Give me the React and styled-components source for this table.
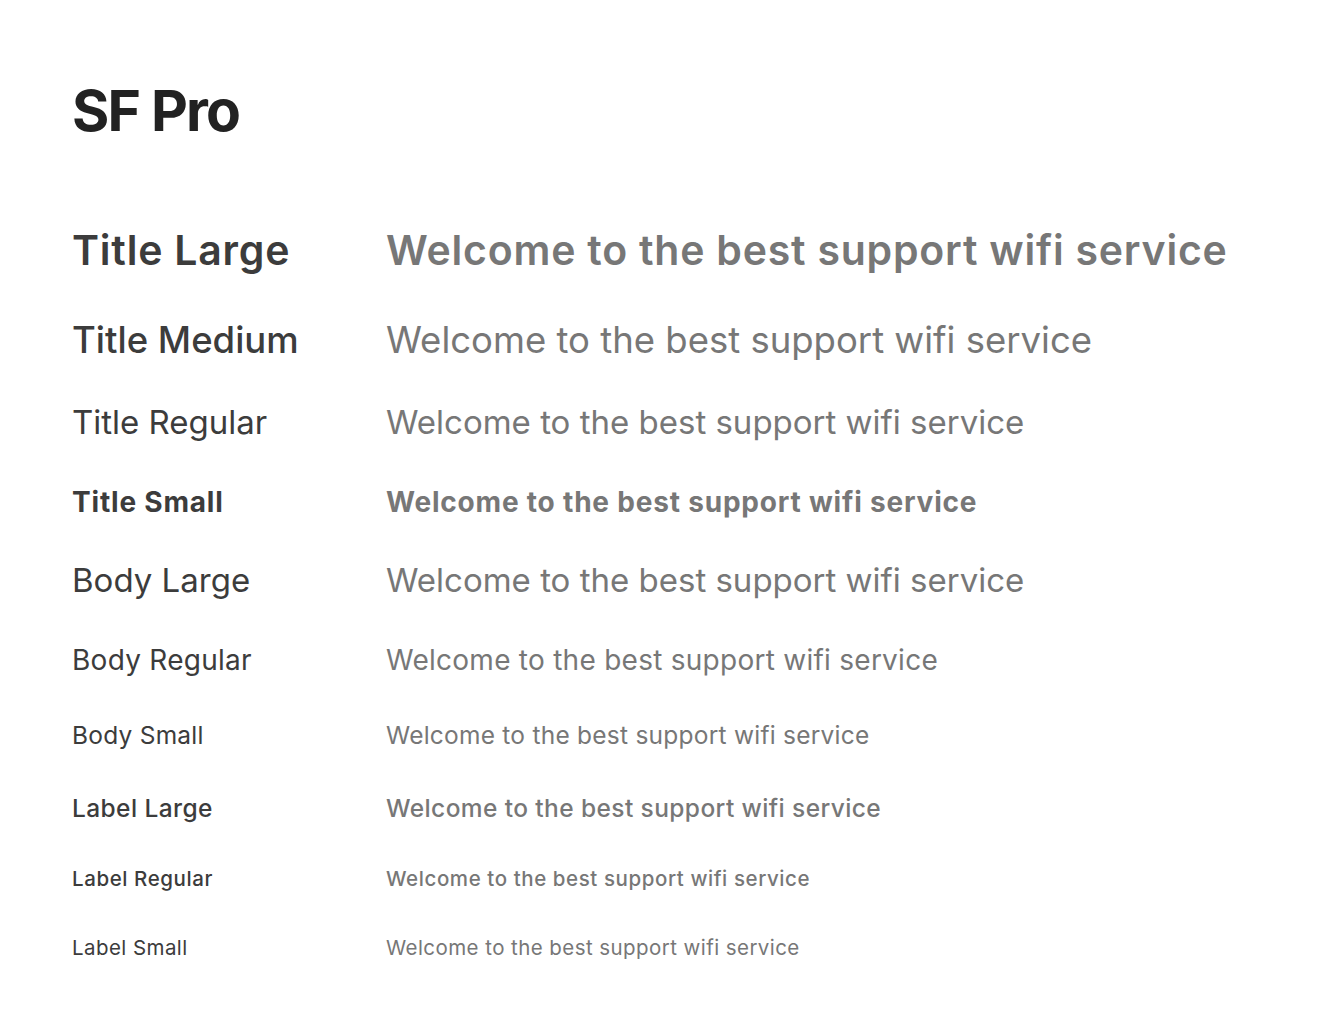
import React from "react";
import styled, { createGlobalStyle } from "styled-components";

const GlobalStyle = createGlobalStyle`
  html, body {
    margin: 0;
    padding: 0;
    background: #ffffff;
  }
  body {
    font-family: Inter, "Noto Sans", "Liberation Sans", sans-serif;
    -webkit-font-smoothing: antialiased;
  }
`;

const SAMPLE = "Welcome to the best support wifi service";

// c = vertical centre of the caps in the reference, ls = tracking
const styles = [
  { name: "Title Large", size: 41, weight: 600, ls: 0.78, c: 251 },
  { name: "Title Medium", size: 36.5, weight: 500, sampleWeight: 400, ls: 0, c: 340.5 },
  { name: "Title Regular", size: 33, weight: 400, ls: 0, c: 423 },
  { name: "Title Small", size: 28, weight: 700, ls: 0.8, c: 502.5 },
  { name: "Body Large", size: 33, weight: 400, ls: 0, c: 581 },
  { name: "Body Regular", size: 28, weight: 400, ls: 0.26, c: 661 },
  { name: "Body Small", size: 24.5, weight: 400, ls: 0.24, c: 736 },
  { name: "Label Large", size: 24.5, weight: 500, ls: 0.4, c: 809 },
  { name: "Label Regular", size: 20.5, weight: 500, ls: 0.58, c: 879.5 },
  { name: "Label Small", size: 20.5, weight: 400, ls: 0.43, c: 948.5 },
];

const Page = styled.div`
  padding: 0 0 40px 72px;
  min-height: 1016px;
  box-sizing: border-box;
`;

const Heading = styled.h1`
  margin: 0;
  padding-top: 76px;
  font-size: 57px;
  line-height: 70px;
  font-weight: 700;
  letter-spacing: -1.8px;
  color: #222222;
`;

const List = styled.div`
  display: flex;
  flex-direction: column;
`;

const Row = styled.div`
  display: grid;
  grid-template-columns: 314px 1fr;
  height: ${(p) => p.$h}px;
  font-size: ${(p) => p.$size}px;
  letter-spacing: ${(p) => p.$ls}px;
  line-height: 1.2;
`;

const Label = styled.div`
  font-weight: ${(p) => p.$weight};
  color: #3c3c3c;
  white-space: nowrap;
`;

const Sample = styled.div`
  font-weight: ${(p) => p.$weight};
  color: #777777;
  white-space: nowrap;
`;

export default function App() {
  const headingBottom = 76 + 70;
  const tops = styles.map((s) => s.c - 0.6 * s.size);
  return (
    <>
      <GlobalStyle />
      <Page>
        <Heading>SF Pro</Heading>
        <List style={{ marginTop: tops[0] - headingBottom }}>
          {styles.map((s, i) => {
            const h = i < styles.length - 1 ? tops[i + 1] - tops[i] : s.size * 1.2;
            return (
              <Row key={s.name} $h={h} $size={s.size} $ls={s.ls}>
                <Label $weight={s.weight}>{s.name}</Label>
                <Sample $weight={s.sampleWeight ?? s.weight}>{SAMPLE}</Sample>
              </Row>
            );
          })}
        </List>
      </Page>
    </>
  );
}
